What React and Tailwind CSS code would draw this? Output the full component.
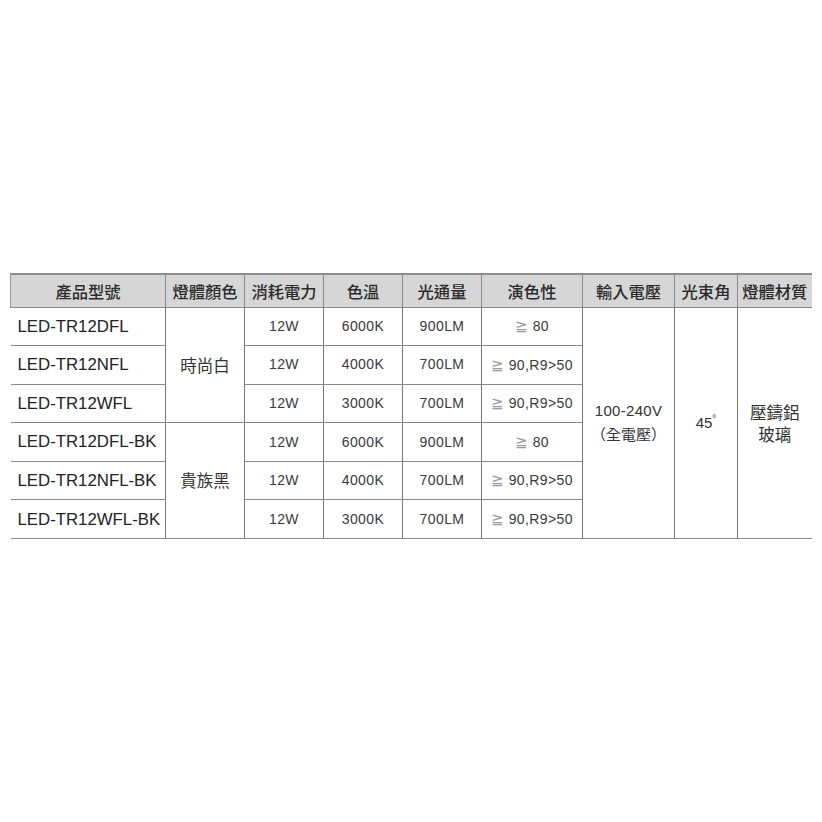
import React from "react";

const headers = ["產品型號", "燈體顏色", "消耗電力", "色溫", "光通量", "演色性", "輸入電壓", "光束角", "燈體材質"];
const widths = ["w-[155px]", "w-[79px]", "w-[79px]", "w-[79px]", "w-[79px]", "w-[101px]", "w-[92px]", "w-[63px]", "w-[74px]"];

const rows = [
  { model: "LED-TR12DFL", watt: "12W", temp: "6000K", lm: "900LM", cri: "≧ 80" },
  { model: "LED-TR12NFL", watt: "12W", temp: "4000K", lm: "700LM", cri: "≧ 90,R9>50" },
  { model: "LED-TR12WFL", watt: "12W", temp: "3000K", lm: "700LM", cri: "≧ 90,R9>50" },
  { model: "LED-TR12DFL-BK", watt: "12W", temp: "6000K", lm: "900LM", cri: "≧ 80" },
  { model: "LED-TR12NFL-BK", watt: "12W", temp: "4000K", lm: "700LM", cri: "≧ 90,R9>50" },
  { model: "LED-TR12WFL-BK", watt: "12W", temp: "3000K", lm: "700LM", cri: "≧ 90,R9>50" },
];

const cjk = "font-['Noto_Sans_CJK_TC','Noto_Sans_CJK_SC',sans-serif]";
const latin = "font-['Liberation_Sans',Arial,sans-serif]";
const num = "text-[14px] text-[#3a3a3a] text-center font-['Liberation_Sans',Arial,sans-serif] tracking-[0.4px]";
const cell = "border-b-[1.5px] border-b-[#8a8a8a] border-r-[1.5px] border-r-[#777] h-[38.6px] p-0";

export default function App() {
  return (
    <div className="min-h-[822px] w-[822px] bg-white pt-[273px] pl-[10px]">
      <table className="w-[801px] border-collapse table-fixed">
        <colgroup>
          {widths.map((w, i) => (
            <col key={i} className={w} />
          ))}
        </colgroup>
        <thead>
          <tr className="h-[33px] bg-[#d6d6d6]">
            {headers.map((h, i) => (
              <th
                key={h}
                className={`p-0 border-t-2 border-t-[#8c8c8c] border-b-[1.5px] border-b-[#8a8a8a] ${
                  i === 0 ? "border-l-[1.5px] border-l-[#9a9a9a]" : ""
                } ${i < headers.length - 1 ? "border-r-[1.5px] border-r-[#8a8a8a]" : ""} text-[16.3px] font-medium text-[#2b2b2b] ${cjk}`}
              >
                {h}
              </th>
            ))}
          </tr>
        </thead>
        <tbody>
          {rows.map((r, i) => (
            <tr key={r.model}>
              <td className={`${cell} pl-[7px] text-left text-[16.8px] text-[#222] ${latin}`}>{r.model}</td>
              {i % 3 === 0 && (
                <td rowSpan={3} className={`${cell} text-center text-[16.5px] text-[#333] ${cjk}`}>
                  {i === 0 ? "時尚白" : "貴族黑"}
                </td>
              )}
              <td className={`${cell} ${num}`}>{r.watt}</td>
              <td className={`${cell} ${num}`}>{r.temp}</td>
              <td className={`${cell} ${num}`}>{r.lm}</td>
              <td className={`${cell} ${num}`}>
                <span className="text-[#9a9a9a] text-[15px]">≧</span>
                {r.cri.slice(1)}
              </td>
              {i === 0 && (
                <>
                  <td rowSpan={6} className={`${cell} text-center text-[#333]`}>
                    <div className={`text-[15px] leading-[22px] tracking-[0.3px] ${latin}`}>100-240V</div>
                    <div className={`text-[15px] leading-[24px] ${cjk}`}>（全電壓）</div>
                  </td>
                  <td rowSpan={6} className={`${cell} text-center text-[15px] text-[#333] ${latin}`}>
                    45<span className="relative -top-[6px] text-[10px]">°</span>
                  </td>
                  <td rowSpan={6} className={`border-b-[1.5px] border-b-[#8a8a8a] p-0 text-center text-[16.5px] leading-[22px] text-[#333] ${cjk}`}>
                    <div>壓鑄鋁</div>
                    <div>玻璃</div>
                  </td>
                </>
              )}
            </tr>
          ))}
        </tbody>
      </table>
    </div>
  );
}
